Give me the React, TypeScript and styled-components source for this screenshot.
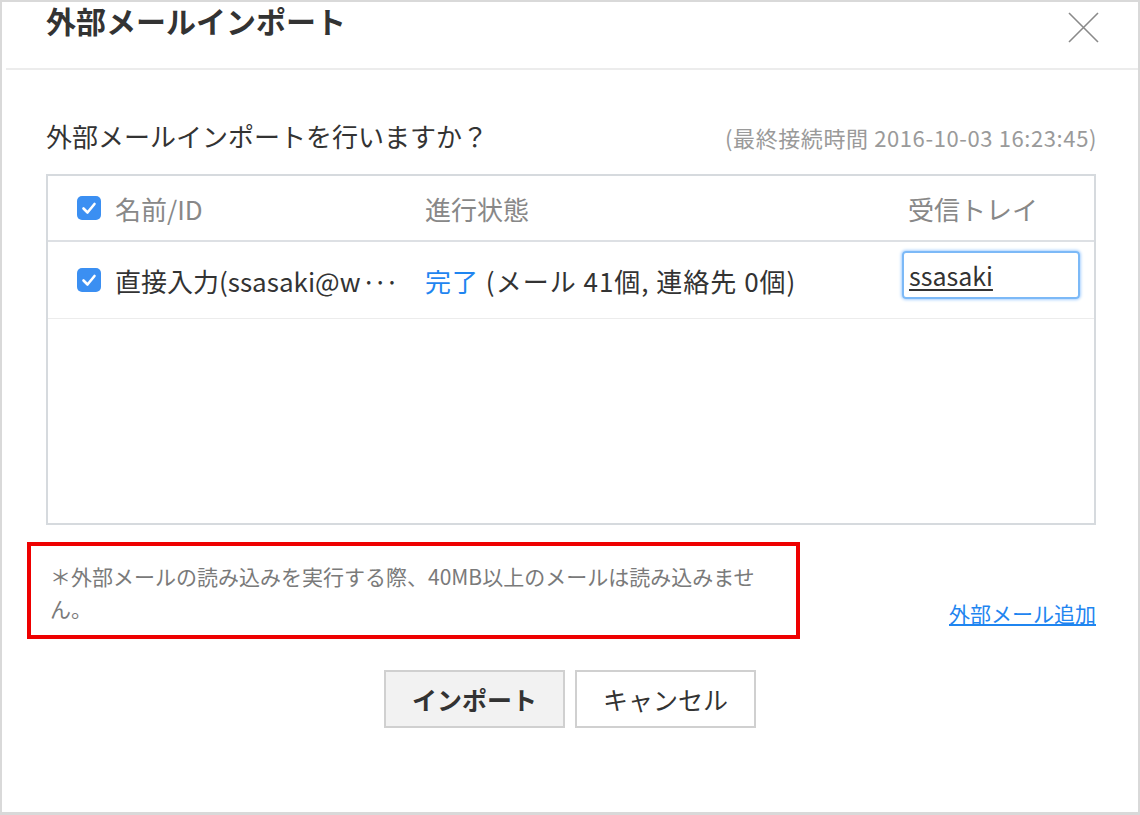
import React from "react";
import styled, { createGlobalStyle } from "styled-components";

const Global = createGlobalStyle`
  html, body { margin: 0; padding: 0; background: #fff; }
  body { font-family: "Noto Sans CJK JP", "Noto Sans", "Liberation Sans", sans-serif; color: #333; }
  * { box-sizing: border-box; }
`;

const Frame = styled.div`
  width: 1140px;
  height: 815px;
  border: 2px solid #d9d9d9;
  border-bottom-width: 3px;
  display: flex;
  flex-direction: column;
  background: #fff;
`;

const Header = styled.div`
  height: 68px;
  margin-left: 4px;
  padding: 0 39px 0 40px;
  border-bottom: 2px solid #ececec;
  display: flex;
  justify-content: space-between;
  align-items: flex-start;
`;

const Title = styled.h1`
  margin: -3px 0 0;
  font-size: 30px;
  line-height: 42px;
  font-weight: 700;
  color: #333;
`;

const CloseButton = styled.button`
  margin-top: 9px;
  padding: 0;
  width: 32px;
  height: 32px;
  border: 0;
  background: transparent;
  display: flex;
  align-items: center;
  justify-content: center;
  cursor: pointer;
`;

const Body = styled.div`
  flex: 1;
  padding: 50px 42px 0 44px;
  display: flex;
  flex-direction: column;
`;

const SubRow = styled.div`
  display: flex;
  justify-content: space-between;
  align-items: baseline;
  height: 32px;
`;

const Question = styled.div`
  font-size: 26px;
  line-height: 32px;
  color: #333;
`;

const Stamp = styled.div`
  font-size: 22px;
  line-height: 32px;
  color: #9a9a9a;
  letter-spacing: 0.6px;
  margin-right: -1px;
`;

const Table = styled.div`
  margin-top: 22px;
  height: 351px;
  border: 2px solid #d6dade;
  display: flex;
  flex-direction: column;
`;

const Row = styled.div<{ $head?: boolean }>`
  display: grid;
  grid-template-columns: 377px 477px 1fr;
  height: ${(p) => (p.$head ? "66px" : "77px")};
  border-bottom: ${(p) => (p.$head ? "2px solid #dde0e4" : "1px solid #ececec")};
  align-items: center;
  font-size: 26px;
  color: ${(p) => (p.$head ? "#888" : "#333")};
`;

const NameCell = styled.div`
  display: flex;
  align-items: center;
  gap: 14px;
  padding-left: 29px;
  white-space: nowrap;
`;

const Ellipsis = styled.span`
  letter-spacing: -3px;
  margin-left: 1px;
`;

const Cell = styled.div<{ $pad?: number; $spread?: boolean }>`
  padding-left: ${(p) => p.$pad ?? 0}px;
  white-space: nowrap;
  letter-spacing: ${(p) => (p.$spread ? "1px" : "0")};
`;

const Done = styled.span`
  color: #1f85f0;
`;

const TrayInput = styled.div`
  width: 178px;
  height: 48px;
  margin-top: -10px;
  border: 2px solid #7cb9f7;
  border-radius: 4px;
  box-shadow: 0 0 3px 1px #a9d1ff;
  padding-left: 5px;
  display: flex;
  align-items: center;
  font-size: 25px;
  color: #333;
  text-decoration: underline;
  text-underline-offset: 3px;
`;

const NoteRow = styled.div`
  margin-top: 17px;
  display: flex;
  justify-content: space-between;
  align-items: flex-end;
`;

const Note = styled.div`
  margin-left: -19px;
  width: 773px;
  height: 97px;
  border: 4px solid #ee0000;
  padding: 14px 10px 0 19px;
  font-size: 21px;
  line-height: 32px;
  color: #7a7a7a;
`;

const AddLink = styled.a`
  margin-bottom: 12px;
  font-size: 21px;
  line-height: 28px;
  color: #1f85f0;
  text-decoration: underline;
  cursor: pointer;
`;

const Buttons = styled.div`
  margin-top: 31px;
  display: flex;
  justify-content: center;
  gap: 10px;
  padding-right: 2px;
`;

const Button = styled.button<{ $primary?: boolean }>`
  width: 181px;
  height: 58px;
  border: 2px solid #d0d0d0;
  background: ${(p) => (p.$primary ? "#f2f2f2" : "#fff")};
  font-family: inherit;
  font-size: 25px;
  font-weight: ${(p) => (p.$primary ? 700 : 400)};
  color: #333;
  cursor: pointer;
`;

const Check = () => (
  <svg width="24" height="24" viewBox="0 0 24 24">
    <rect x="0" y="0" width="24" height="24" rx="5" fill="#3b8ff2" />
    <path d="M6.5 12.5 L10.5 16.5 L17.5 8" fill="none" stroke="#fff" strokeWidth="2.6" strokeLinecap="round" strokeLinejoin="round" />
  </svg>
);

export default function App() {
  return (
    <>
      <Global />
      <Frame>
        <Header>
          <Title>外部メールインポート</Title>
          <CloseButton aria-label="close">
            <svg width="31" height="31" viewBox="0 0 31 31">
              <path d="M1 1 L30 30 M30 1 L1 30" stroke="#8a8a8a" strokeWidth="1.6" fill="none" />
            </svg>
          </CloseButton>
        </Header>
        <Body>
          <SubRow>
            <Question>外部メールインポートを行いますか？</Question>
            <Stamp>(最終接続時間 2016-10-03 16:23:45)</Stamp>
          </SubRow>
          <Table>
            <Row $head>
              <NameCell>
                <Check />
                <span>名前/ID</span>
              </NameCell>
              <Cell>進行状態</Cell>
              <Cell $pad={6}>受信トレイ</Cell>
            </Row>
            <Row>
              <NameCell>
                <Check />
                <span>
                  直接入力(ssasaki@w<Ellipsis>···</Ellipsis>
                </span>
              </NameCell>
              <Cell $spread>
                <Done>完了</Done> (メール 41個, 連絡先 0個)
              </Cell>
              <Cell>
                <TrayInput>ssasaki</TrayInput>
              </Cell>
            </Row>
          </Table>
          <NoteRow>
            <Note>
              ＊外部メールの読み込みを実行する際、40MB以上のメールは読み込みませ
              <br />
              ん。
            </Note>
            <AddLink>外部メール追加</AddLink>
          </NoteRow>
          <Buttons>
            <Button $primary>インポート</Button>
            <Button>キャンセル</Button>
          </Buttons>
        </Body>
      </Frame>
    </>
  );
}
